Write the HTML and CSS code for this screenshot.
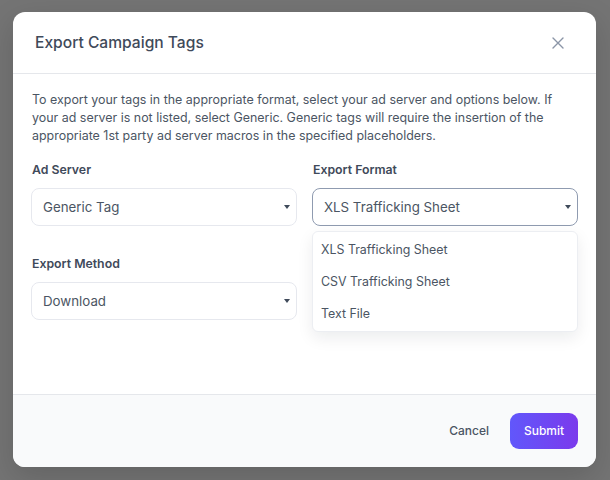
FILE: index.html
```html
<!DOCTYPE html>
<html>
<head>
<meta charset="utf-8">
<link rel="stylesheet" href="styles.css">
</head>
<body>
<div class="modal">
  <div class="modal-header">
    <h2 class="title">Export Campaign Tags</h2>
    <button class="close" aria-label="Close">
      <svg width="12" height="12" viewBox="0 0 12 12"><path d="M1 1L11 11M11 1L1 11" stroke="#8b95a7" stroke-width="1.4" stroke-linecap="round"/></svg>
    </button>
  </div>
  <div class="modal-body">
    <p class="desc">To export your tags in the appropriate format, select your ad server and options below. If your ad server is not listed, select Generic. Generic tags will require the insertion of the appropriate 1st party ad server macros in the specified placeholders.</p>
    <div class="grid">
      <div class="field">
        <label class="label">Ad Server</label>
        <div class="select"><span>Generic Tag</span><i class="caret"></i></div>
      </div>
      <div class="field">
        <label class="label">Export Format</label>
        <div class="select-wrap">
          <div class="select focused"><span>XLS Trafficking Sheet</span><i class="caret"></i></div>
          <ul class="menu">
            <li>XLS Trafficking Sheet</li>
            <li>CSV Trafficking Sheet</li>
            <li>Text File</li>
          </ul>
        </div>
      </div>
      <div class="field">
        <label class="label">Export Method</label>
        <div class="select"><span>Download</span><i class="caret"></i></div>
      </div>
    </div>
  </div>
  <div class="modal-footer">
    <button class="btn-cancel">Cancel</button>
    <button class="btn-submit">Submit</button>
  </div>
</div>
</body>
</html>
```
FILE: styles.css
```css
* { box-sizing: border-box; }
html, body { margin: 0; height: 100%; }
body {
  background: #747474;
  padding: 12px 14px 13px 13px;
  font-family: Inter, "Noto Sans", sans-serif;
}
.modal {
  width: 583px;
  height: 455px;
  background: #fff;
  border-radius: 12px;
  display: flex;
  flex-direction: column;
  overflow: hidden;
  box-shadow: 0 10px 30px rgba(0,0,0,0.15);
}
.modal-header {
  height: 62px;
  border-bottom: 1px solid #e5e7eb;
  display: flex;
  align-items: center;
  justify-content: space-between;
  padding: 0 31px 0 22px;
  flex: none;
}
.title {
  margin: 0;
  font-size: 15.6px;
  font-weight: 500;
  color: #3f4a5a;
}
.close {
  border: 0;
  background: none;
  padding: 0;
  width: 14px;
  height: 14px;
  display: flex;
  align-items: center;
  justify-content: center;
}
.modal-body {
  flex: 1;
  padding: 17px 18px 0 18px;
}
.desc {
  margin: 0 0 0 1px;
  font-size: 12.45px;
  line-height: 18px;
  color: #4b5563;
}
.grid {
  margin-top: 16px;
  display: grid;
  grid-template-columns: 266px 266px;
  column-gap: 15px;
  row-gap: 29px;
}
.field { display: flex; flex-direction: column; }
.label {
  font-size: 12.3px;
  line-height: 18px;
  font-weight: 600;
  color: #3f4a5a;
  margin-left: 1px;
  margin-bottom: 9px;
}
.select-wrap { position: relative; }
.select {
  height: 38px;
  border: 1px solid #e6e8ee;
  border-radius: 8px;
  display: flex;
  align-items: center;
  justify-content: space-between;
  padding: 0 6px 0 11px;
  font-size: 13.3px;
  color: #4b5563;
  background: #fff;
}
.select.focused { border-color: #8f9bb0; }
.caret {
  width: 0; height: 0;
  border-left: 3.5px solid transparent;
  border-right: 3.5px solid transparent;
  border-top: 4px solid #3f4a5a;
}
.menu {
  position: absolute;
  left: 0; right: 0;
  top: 43px;
  margin: 0;
  padding: 2px 0 1px;
  list-style: none;
  background: #fff;
  border: 1px solid #eceef2;
  border-radius: 6px;
  box-shadow: 0 6px 16px rgba(15,23,42,0.08);
}
.menu li {
  height: 32px;
  line-height: 32px;
  padding-left: 8px;
  font-size: 12.4px;
  color: #4b5563;
}
.modal-footer {
  flex: none;
  height: 73px;
  background: #f9fafb;
  border-top: 1px solid #e5e7eb;
  display: flex;
  align-items: center;
  justify-content: flex-end;
  padding: 0 18px 1px 0;
  gap: 21px;
}
.btn-cancel {
  border: 0;
  background: none;
  padding: 0;
  font-family: inherit;
  font-size: 12px;
  font-weight: 500;
  color: #4b5563;
}
.btn-submit {
  border: 0;
  width: 68px;
  height: 36px;
  border-radius: 9px;
  background: linear-gradient(90deg, #6157fb, #7b3aec);
  color: #fff;
  font-family: inherit;
  font-size: 12px;
  font-weight: 500;
}
```
